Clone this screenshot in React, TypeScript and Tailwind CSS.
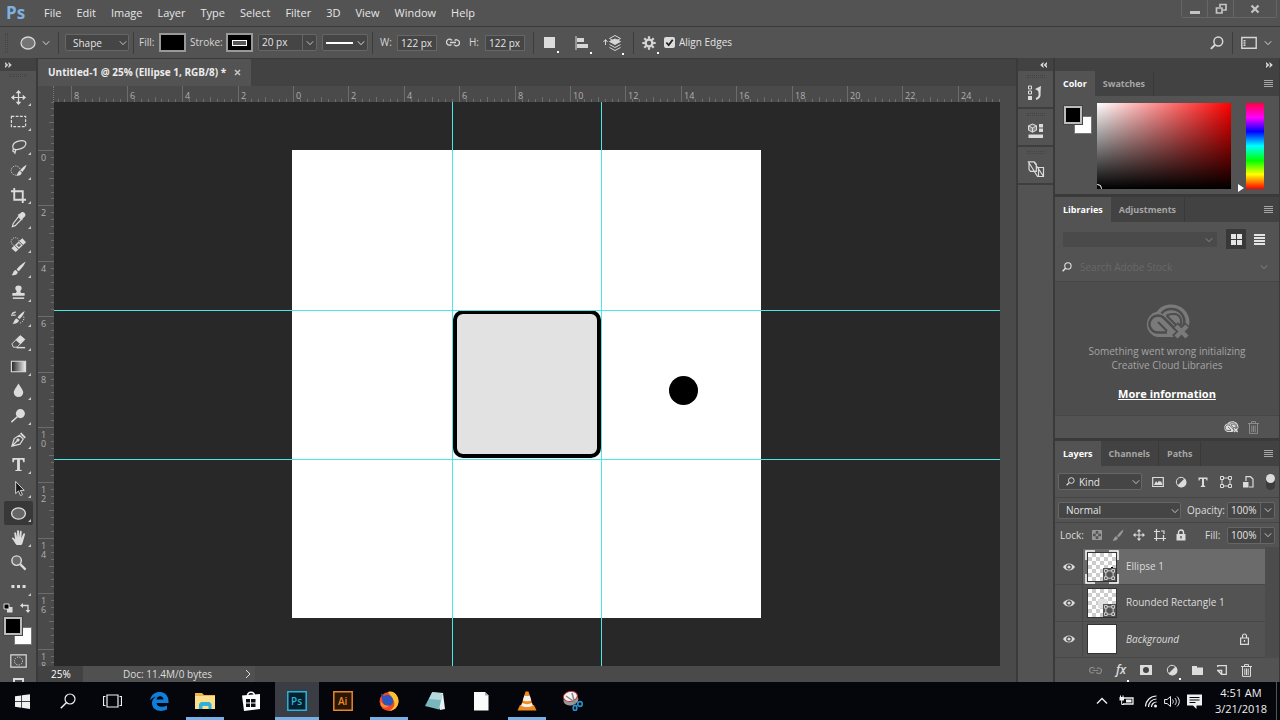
import { ReactNode } from 'react';

const menus = ['File', 'Edit', 'Image', 'Layer', 'Type', 'Select', 'Filter', '3D', 'View', 'Window', 'Help'];

const UNIT = 27.7;
const ORIGIN = -234;

type IconProps = { children: ReactNode; size?: string; box?: string; className?: string };

function Icon({ children, size = 'size-[18px]', box = '0 0 18 18', className = '' }: IconProps) {
  return (
    <svg viewBox={box} className={`${size} shrink-0 ${className}`} fill="none" stroke="currentColor" aria-hidden="true">
      {children}
    </svg>
  );
}

function Chevron({ className = '' }: { className?: string }) {
  return (
    <Icon size="size-2" box="0 0 8 8" className={className}>
      <path d="M.8 2.3 4 5.7l3.2-3.4" />
    </Icon>
  );
}

function Dot() {
  return <span className="absolute -right-[3px] -bottom-[4px] size-[2px] bg-white" />;
}

function Divider() {
  return <span className="h-[22px] w-px shrink-0 bg-[#3c3c3c]" />;
}

function Magnifier({ className = 'size-[14px]' }: { className?: string }) {
  return (
    <Icon size={className} box="0 0 14 14">
      <circle cx="8.3" cy="5.5" r="4.4" strokeWidth="1.5" />
      <path d="M5 8.8.9 12.9" strokeWidth="2" />
    </Icon>
  );
}

function Selector({ label, value, className, pad = 'pl-[7px]' }: { label: string; value: string; className: string; pad?: string }) {
  return (
    <span className={`relative block h-[17px] ${className}`}>
      <select
        aria-label={label}
        className={`block h-full w-full appearance-none rounded-[2px] border border-[#666] bg-[#454545] ${pad} pr-4 text-[10px] leading-[14px] text-[#e4e4e4]`}
      >
        <option>{value}</option>
      </select>
      <Chevron className="pointer-events-none absolute top-[5px] right-[2px] text-[#c0c0c0]" />
    </span>
  );
}

function Combo({ id, value, className }: { id: string; value: string; className: string }) {
  return (
    <span className={`flex h-[17px] rounded-[2px] border border-[#666] bg-[#454545] ${className}`}>
      <input id={id} aria-label={id} defaultValue={value} className="w-0 min-w-0 flex-1 bg-transparent pl-[3px] text-[10px] text-[#e4e4e4]" />
      <button aria-label={`${id} options`} className="grid w-[14px] place-items-center border-l border-[#666] text-[#c0c0c0]">
        <Chevron />
      </button>
    </span>
  );
}

function MenuBar() {
  return (
    <header className="flex h-[27px] shrink-0 items-center border-b border-[#3a3a3a] bg-[#535353]">
      <span className="w-9 pl-[6px] text-[17px] leading-6 font-bold text-[#7fb0e0]">Ps</span>
      <nav className="flex gap-[15px] pl-2 text-[11px] text-[#e6e6e6]">
        {menus.map((m) => (
          <button key={m}>{m}</button>
        ))}
      </nav>
      <div className="mr-[3px] ml-auto flex h-[18px] self-start rounded-b-[2px] border border-t-0 border-[#666] text-[#c4c4c4]">
        <button aria-label="Minimize" className="grid w-[26px] place-items-center border-r border-[#666]">
          <span className="mt-[7px] h-[3px] w-[10px] bg-current" />
        </button>
        <button aria-label="Restore" className="grid w-[26px] place-items-center border-r border-[#666]">
          <Icon size="size-3" box="0 0 12 12">
            <path d="M5 4V1.500h6V7H8M1.500 5h5.500v5H1.500z" strokeWidth="1.700" />
          </Icon>
        </button>
        <button aria-label="Close" className="grid w-[42px] place-items-center">
          <Icon size="size-[10px]" box="0 0 10 10">
            <path d="m1.500 1.500 7 7m0-7-7 7" strokeWidth="2.200" />
          </Icon>
        </button>
      </div>
    </header>
  );
}

function OptionsBar() {
  return (
    <div className="flex h-[31px] shrink-0 items-center bg-[#535353] text-[10px] text-[#d6d6d6]">
      <span className="ml-[5px] h-5 w-[3px] border-x border-dotted border-[#444]" />
      <button aria-label="Ellipse tool presets" className="ml-3 flex w-[38px] items-center justify-between pr-2">
        <Icon size="h-[14px] w-4" box="0 0 16 14">
          <ellipse cx="8" cy="7" rx="7" ry="6" fill="#757575" strokeWidth="1.300" />
        </Icon>
        <Chevron />
      </button>
      <Divider />
      <Selector label="Tool mode" value="Shape" className="ml-[6px] mr-1 w-16" />
      <Divider />
      <span className="ml-[5px] w-5">Fill:</span>
      <button aria-label="Fill" className="h-[19px] w-[27px] border-2 border-[#999] bg-black" />
      <span className="ml-1 w-9">Stroke:</span>
      <button aria-label="Stroke" className="grid h-[19px] w-[27px] place-items-center border-2 border-[#999] bg-black">
        <span className="h-[6px] w-[15px] border border-white bg-[#555]" />
      </button>
      <Combo id="stroke-width" value="20 px" className="ml-[5px] w-[59px]" />
      <button aria-label="Stroke type" className="ml-[5px] mr-1 flex h-[17px] w-[46px] items-center justify-between rounded-[2px] border border-[#666] bg-[#454545] pr-[2px] pl-[3px]">
        <span className="h-[2px] w-[27px] bg-white" />
        <Chevron />
      </button>
      <Divider />
      <label htmlFor="w" className="ml-[7px] w-[17px]">W:</label>
      <input id="w" defaultValue="122 px" className="h-4 w-10 border border-[#666] bg-[#454545] pl-[3px] text-[#e4e4e4]" />
      <Icon size="mx-[9px] h-[9px] w-[14px]" box="0 0 14 9">
        <path d="M5.500 6.500a3 3 0 1 1 .5-4M8.500 2.500a3 3 0 1 1-.5 4M4 4.500h6" strokeWidth="1.300" />
      </Icon>
      <label htmlFor="h" className="w-4">H:</label>
      <input id="h" defaultValue="122 px" className="mr-2 h-4 w-10 border border-[#666] bg-[#454545] pl-[3px] text-[#e4e4e4]" />
      <Divider />
      <button aria-label="Path operations" className="relative ml-[10px] size-[11px] bg-[#dcdcdc]">
        <span className="absolute -right-[4px] -bottom-[5px] size-[2px] bg-white" />
      </button>
      <button aria-label="Path alignment" className="relative ml-5">
        <Icon size="size-[14px]" box="0 0 14 14">
          <path d="M1 0v14" />
          <path d="M2 2h7v4H2zM2 8h11v4H2z" fill="currentColor" stroke="none" />
        </Icon>
        <Dot />
      </button>
      <button aria-label="Path arrangement" className="relative ml-[14px]">
        <Icon size="h-4 w-[18px]" box="0 0 18 16">
          <path d="M2.500 10V5M.5 7l2-2.500L4.500 7" />
          <path d="m6.500 3.500 5.500-3 5.500 3-5.500 3zM6.500 9.500l5.500 3 5.500-3M6.500 12.500l5.500 3 5.500-3" />
          <path d="m6.500 6.500 5.500-2.500 5.500 2.500-5.500 3z" fill="currentColor" />
        </Icon>
        <Dot />
      </button>
      <span className="w-3" />
      <Divider />
      <button aria-label="Geometry options" className="relative ml-2">
        <Icon size="size-[14px]" box="0 0 14 14">
          <circle cx="7" cy="7" r="3.400" strokeWidth="2.400" />
          <path d="M7 .3v2.500M7 11.200v2.500M.3 7h2.500M11.200 7h2.500M2.300 2.300 4 4M10 10l1.700 1.700M2.300 11.700 4 10M10 4l1.700-1.700" strokeWidth="2.200" />
        </Icon>
        <Dot />
      </button>
      <label className="ml-2 flex items-center gap-1 text-[#e4e4e4]">
        <span className="relative size-[11px]">
          <input type="checkbox" defaultChecked className="block size-full appearance-none rounded-[2px] bg-[#dcdcdc]" />
          <Icon size="size-[11px]" box="0 0 11 11" className="pointer-events-none absolute inset-0 text-[#222]">
            <path d="M2.300 5.500 4.700 8l4-5.300" strokeWidth="1.800" />
          </Icon>
        </span>
        Align Edges
      </label>
      <button aria-label="Search" className="mr-2 ml-auto">
        <Magnifier />
      </button>
      <Divider />
      <button aria-label="Workspace" className="mr-2 ml-2 flex items-center gap-[7px]">
        <Icon size="h-[13px] w-4" box="0 0 16 13">
          <path d="M.8 1.500h14.400v10.700H.8z" strokeWidth="1.400" />
          <path d="M3.500 4v6" strokeWidth="2" strokeDasharray="1.500 .7" />
        </Icon>
        <Chevron />
      </button>
    </div>
  );
}

const tools: { name: string; draw: ReactNode; plain?: boolean }[] = [
  { name: 'Move', draw: <><path d="M9 3v12M3 9h12" strokeWidth="1.300" /><path d="m9 1 3 3.500H6zM9 17l3-3.500H6zM1 9l3.500-3v6zM17 9l-3.500-3v6z" fill="currentColor" stroke="none" /></> },
  { name: 'Rectangular marquee', draw: <path d="M1.500 3.500h15v11h-15z" strokeWidth="1.300" strokeDasharray="3 1.500" /> },
  { name: 'Lasso', draw: <path d="M5 12.500C2 11 2.500 7 5 5s8-3 10.500-1.500 1 5.500-2 7-6 2-8.500 1.500-2.500 2.500-.7 2.800 2.200-2 .7-2.800M5 14c.5 1 .5 2 0 2.800" strokeWidth="1.300" /> },
  { name: 'Quick selection', draw: <><circle cx="6" cy="9" r="4.800" strokeDasharray="1.200 1.200" /><path d="M17.500 3c-2 1-5 3.500-6.500 5.500l2 2c2-2 4-5 4.500-7.500zM10.500 9.500l2 2c-.5 2.500-3 3.500-6 3 1.500-.8 1.500-4.500 4-5z" fill="currentColor" stroke="none" /></> },
  { name: 'Crop', draw: <path d="M4.500 1v12.500H17M1 4.500h12.500V17" strokeWidth="2" /> },
  { name: 'Eyedropper', draw: <><path d="m9 6 3 3-6.500 6.500-3 1 .8-3z" strokeWidth="1.200" /><path d="m8 4 1.500-.5L12 1.500c2-1.500 5.500 1.500 4 4L13.500 8l-.5 2z" fill="currentColor" stroke="none" /></> },
  { name: 'Healing brush', draw: <><circle cx="5.500" cy="6" r="4.200" strokeDasharray="1.200 1.200" /><path d="M1.500 13 13 2.500l4 4L6 17z" fill="currentColor" stroke="none" /><path d="m4.800 9.800 4.500 4.500M9.500 5.500l4.500 4.500" stroke="#535353" /><path d="M7.500 9.700h4M9.500 7.700v4" stroke="#535353" strokeWidth="1.200" /></> },
  { name: 'Brush', draw: <path d="M16.500 1.500C13 3.500 9 7 7 10l2 2c3-2.500 6.500-7 7.500-10.500zM6 10.500l2.300 2.300C8 15.500 5 16.800 1.500 16c2-1 1.700-5 4.500-5.500z" fill="currentColor" stroke="none" /> },
  { name: 'Clone stamp', draw: <><path d="M9 1.500c4 0 4 3.500 2.300 5.500-.7 1-.3 2.500.7 2.500h3.500v3h-13v-3H6c1 0 1.400-1.500.7-2.500C5 5 5 1.500 9 1.500z" fill="currentColor" stroke="none" /><path d="M3 15h12" strokeWidth="1.600" /></> },
  { name: 'History brush', draw: <><path d="M15.500 2C12 4 9.500 6.500 8 9l2 1.500c2.500-2 4.700-5 5.500-8.500zM7 10l2.500 2c-.5 3-3.500 4-7 3.500 2-1 2-5 4.500-5.500z" fill="currentColor" stroke="none" /><path d="M1 6.500h5M2 5l4-2" strokeWidth="1.500" /><path d="M14.500 8c1 3-1 6-4 7" strokeDasharray="1.300 1.300" /></> },
  { name: 'Eraser', draw: <><path d="M2 11.500 10.500 3l5 4-8 8H3.500z" /><path d="m6 7.500 5-5 5 4-5 5.500z" fill="currentColor" stroke="none" /><path d="M7 15.500h9" strokeWidth="1.500" /></> },
  { name: 'Gradient', draw: <><defs><linearGradient id="fade"><stop stopColor="#222" /><stop offset="1" stopColor="#eee" /></linearGradient></defs><path d="M1.500 3.500h15v11h-15z" fill="url(#fade)" strokeWidth="1.200" /></> },
  { name: 'Blur', draw: <path d="M9 1.500c2 4 5 6.500 5 9.500a5 5 0 0 1-10 0c0-3 3-5.500 5-9.500z" fill="currentColor" stroke="none" /> },
  { name: 'Dodge', draw: <><circle cx="11" cy="7" r="4.800" fill="currentColor" stroke="none" /><path d="m8 10-6.500 6" strokeWidth="1.600" /></> },
  { name: 'Pen', draw: <><path d="M2 16 4.500 8 10 4.500l4 4-3.500 5.500zM2 16l6-6" strokeWidth="1.300" /><circle cx="8.500" cy="9.500" r="1.200" fill="currentColor" /><path d="m10.500 3 5 5 1.300-1.500-4.800-5z" fill="currentColor" stroke="none" /></> },
  { name: 'Type', draw: <path d="M2.500 2h13v4.500H14l-.7-2.500H10.500v10.500l2 .5v1h-7v-1l2-.5V4H4.700L4 6.500H2.500z" fill="currentColor" stroke="none" /> },
  { name: 'Path selection', draw: <path d="M6 1.500v13l3-3 2.200 5 2-1-2.200-4.500h4z" fill="#1a1a1a" /> },
  { name: 'Ellipse', draw: <ellipse cx="9" cy="9" rx="7.300" ry="6" fill="#666" strokeWidth="1.400" /> },
  { name: 'Hand', draw: <path d="M6 17c-2-2-3-5-5-7 0-1.500 1.500-1.500 2.500 0l1 1-1-6.500c0-1.500 1.700-1.500 2 0l1 4.500V2.500c0-1.500 2-1.500 2 0V9l1-6.300c.3-1.400 2-1 1.900.4L11 9.700l2-4.500c.7-1.300 2.200-.5 1.800.8L13 12.500c-.4 2-1 3.500-2 4.500z" fill="currentColor" stroke="none" transform="translate(1 0)" /> },
  { name: 'Zoom', plain: true, draw: <><circle cx="7" cy="7" r="5" strokeWidth="1.500" fill="#6a6a6a" /><path d="m11 11 5.500 5.500" strokeWidth="2.400" /></> },
  { name: 'Edit toolbar', draw: <path d="M1.500 9h3.200M7.400 9h3.200M13.300 9h3.200" strokeWidth="3.200" /> },
];

function Toolbar() {
  return (
    <aside className="flex w-[38px] shrink-0 flex-col border-r-2 border-[#3a3a3a] bg-[#535353] text-[#dcdcdc]">
      <button className="h-[13px] bg-[#424242] pl-[5px] text-left text-[#d0d0d0]" aria-label="Expand tools">
        <DoubleArrow />
      </button>
      <span className="mx-auto mt-[3px] mb-2 h-[3px] w-[18px] border-y border-dotted border-[#444]" />
      <div className="flex min-h-0 flex-1 flex-col">
        {tools.map((t) => (
          <button
            key={t.name}
            aria-label={t.name}
            className={`relative mr-[3px] ml-1 flex min-h-0 flex-1 items-center justify-center rounded-[2px] ${t.name === 'Ellipse' ? 'bg-[#383838]' : ''}`}
          >
            <Icon size="size-[17px]">{t.draw}</Icon>
            {!t.plain && <span className="absolute right-[2px] bottom-[3px] border-b-[3px] border-l-[3px] border-b-[#c8c8c8] border-l-transparent" />}
          </button>
        ))}
      </div>
      <div className="flex h-[18px] shrink-0 items-center justify-between pr-[6px] pl-[3px]">
        <Icon size="size-[10px]" box="0 0 10 10">
          <path d="M4 4h5.500v5.500H4z" fill="#ddd" stroke="none" />
          <path d="M1 1h5v5H1z" fill="#000" />
        </Icon>
        <Icon size="size-[10px]" box="0 0 10 10">
          <path d="M3 0v5L0 2.500zM8 10l-2.500-3h5z" fill="currentColor" stroke="none" />
          <path d="M2 2.500h6V8" strokeWidth="1.300" />
        </Icon>
      </div>
      <Swatches />
      <button aria-label="Quick mask" className="mx-auto mt-[9px]">
        <Icon size="h-[14px] w-[17px]" box="0 0 17 14">
          <path d="M.8.8h15.400v12.400H.8z" strokeWidth="1.200" />
          <circle cx="8.500" cy="7" r="4" strokeDasharray="1.200 1.200" />
        </Icon>
      </button>
      <span className="mx-auto mt-[10px] h-[4px] w-[11px] shrink-0 border-2 border-b-0 border-[#ddd]" />
    </aside>
  );
}

function Swatches() {
  return (
    <div className="relative ml-1 h-[28px] w-7 shrink-0">
      <button aria-label="Background color" className="absolute right-0 bottom-0 size-[18px] border border-[#777] bg-white" />
      <button aria-label="Foreground color" className="absolute top-0 left-0 size-[18px] border-2 border-[#bbb] bg-black outline outline-[#444]" />
    </div>
  );
}

function DoubleArrow({ left = false }: { left?: boolean }) {
  return (
    <Icon size="h-[6px] w-[7px]" box="0 0 7 6" className={left ? 'rotate-180' : ''}>
      <path d="m0 0 3.300 3L0 6V4l.8-1L0 2zM3.500 0l3.300 3-3.300 3V4l.8-1-.8-1z" fill="currentColor" stroke="none" />
    </Icon>
  );
}

function Ruler({ vertical = false }: { vertical?: boolean }) {
  const first = vertical ? 0 : -8;
  const last = vertical ? 18 : 24;
  const ticks = Array.from({ length: (last - first + 4) * 4 }, (_, i) => first - 2 + i / 4);
  const labels = Array.from({ length: (last - first) / 2 + 1 }, (_, i) => first + i * 2);
  const at = (u: number) => Math.round(ORIGIN + u * UNIT);
  return (
    <svg className={vertical ? 'h-full w-4 shrink-0' : 'h-4 min-w-0 flex-1'} aria-hidden="true">
      <svg x={vertical ? 0 : '50%'} y={vertical ? '50%' : 0} overflow="visible">
        {ticks.map((u) => {
          const len = u % 2 === 0 ? 16 : u % 1 === 0 ? 5 : 3;
          return vertical ? (
            <rect key={u} x={16 - len} y={at(u)} width={len} height="1" fill="#6c6c6c" />
          ) : (
            <rect key={u} x={at(u)} y={16 - len} width="1" height={len} fill="#6c6c6c" />
          );
        })}
        {labels.map((u) => {
          const text = String(Math.abs(u));
          if (!vertical) {
            return <text key={u} x={at(u) + 3} y="13" fontSize="9" fill="#b0b0b0">{text}</text>;
          }
          return text.split('').map((d, i) => (
            <text key={`${u}-${i}`} x="3" y={at(u) + 11 + i * 9} fontSize="9" fill="#b0b0b0">{d}</text>
          ));
        })}
      </svg>
    </svg>
  );
}

function Artboard() {
  return (
    <div className="relative h-[468px] w-[469px] shrink-0 bg-white">
      <div className="absolute top-[160px] left-[161px] size-[148px] rounded-[10px] border-4 border-black bg-[#e2e2e2]" />
      <div className="absolute top-[226px] left-[377px] size-[29px] rounded-full bg-black" />
      <span className="absolute -inset-y-[100vh] left-[160px] w-px bg-[#4de6e6]" />
      <span className="absolute -inset-y-[100vh] left-[309px] w-px bg-[#4de6e6]" />
      <span className="absolute -inset-x-[100vw] top-[160px] h-px bg-[#4de6e6]" />
      <span className="absolute -inset-x-[100vw] top-[309px] h-px bg-[#4de6e6]" />
    </div>
  );
}

function DocumentArea() {
  return (
    <main className="flex min-w-0 flex-1 flex-col border-r-2 border-[#3a3a3a] bg-[#4a4a4a]">
      <div className="flex h-7 shrink-0 border-t border-[#3a3a3a] bg-[#424242]">
        <div className="flex items-center gap-[8px] bg-[#535353] px-[10px] text-[10px] font-bold text-[#ececec]">
          Untitled-1 @ 25% (Ellipse 1, RGB/8) *
          <button aria-label="Close document" className="text-[#c4c4c4]">
            <Icon size="size-[7px]" box="0 0 7 7">
              <path d="m1 1 5 5m0-5L1 6" strokeWidth="1.600" />
            </Icon>
          </button>
        </div>
      </div>
      <div className="flex h-4 shrink-0 pr-4">
        <span className="w-4 border-r border-dotted border-[#777]" />
        <Ruler />
      </div>
      <div className="flex min-h-0 flex-1 pr-4">
        <Ruler vertical />
        <div className="flex min-w-0 flex-1 items-center justify-center overflow-hidden bg-[#282828] pr-px">
          <Artboard />
        </div>
      </div>
      <footer className="flex h-4 shrink-0 items-center text-[10px] text-[#dcdcdc]">
        <span className="h-full w-[45px] bg-[#424242] pl-[13px] leading-4 text-white">25%</span>
        <span className="flex h-full w-[172px] items-center justify-between bg-[#505050] pr-[3px] pl-10">
          Doc: 11.4M/0 bytes
          <Icon size="size-2" box="0 0 8 8">
            <path d="m2 0 4 4-4 4" />
          </Icon>
        </span>
      </footer>
    </main>
  );
}

const dockIcons: { name: string; draw: ReactNode }[] = [
  { name: 'History', draw: <><path d="M1.500 2h3v3h-3zM1.500 7h3v3h-3z" /><path d="M1 12h4v4H1z" fill="currentColor" stroke="none" /><path d="M9 15c4-1 5-6 2-10" strokeWidth="2" /><path d="m8 5 6-3-.5 6z" fill="currentColor" stroke="none" /></> },
  { name: 'Properties', draw: <><path d="m5.500 2 4 1.800v4.400l-4 2-4-2V3.800zM1.500 3.800l4 2 4-2M5.500 5.800v4.400" fill="#8a8a8a" /><path d="M12 2h4v3.500h-4zM12 6.500h4V10h-4zM1.500 12.500h14.500V16H1.500z" fill="currentColor" stroke="none" /></> },
  { name: 'Shapes', draw: <path d="M.8 1.800h6.500l2 2.500v7H3.500l-1.500-2v-7.500M11.500 7.500h5v9h-5zM1.500 2l9 14.500h6M7 2l9.500 14.500" strokeWidth="1.200" /> },
];

function Dock() {
  return (
    <aside className="flex w-[37px] shrink-0 flex-col border-r-2 border-[#3a3a3a] bg-[#535353] text-[#dcdcdc]">
      <button aria-label="Expand dock" className="flex h-[13px] items-center justify-end bg-[#424242] pr-[6px]">
        <DoubleArrow left />
      </button>
      {dockIcons.map((d) => (
        <div key={d.name} className="flex h-[38px] flex-col items-center border-b-2 border-[#3e3e3e] pt-1">
          <span className="h-[3px] w-[18px] border-y border-dotted border-[#444]" />
          <button aria-label={d.name} className="mt-[6px]">
            <Icon>{d.draw}</Icon>
          </button>
        </div>
      ))}
    </aside>
  );
}

function Tabs({ names }: { names: string[] }) {
  return (
    <div className="flex h-[25px] shrink-0 bg-[#424242] text-[9px] font-bold text-[#a6a6a6]">
      {names.map((n, i) => (
        <button key={n} className={i === 0 ? 'bg-[#535353] px-2 text-white' : 'border-r border-[#393939] px-2'}>
          {n}
        </button>
      ))}
      <button aria-label="Panel menu" className="mr-[6px] ml-auto">
        <Icon size="h-[7px] w-[9px]" box="0 0 9 7">
          <path d="M0 .5h9M0 2.500h9M0 4.500h9M0 6.500h9" />
        </Icon>
      </button>
    </div>
  );
}

function ColorPanel() {
  return (
    <section className="border-b-[3px] border-[#3a3a3a]">
      <Tabs names={['Color', 'Swatches']} />
      <div className="flex h-[98px] pt-[7px] pl-[5px]">
        <div className="mt-[3px]">
          <Swatches />
        </div>
        <div className="relative ml-[5px] h-[86px] flex-1 overflow-hidden bg-[linear-gradient(to_top,#000,transparent),linear-gradient(to_right,#fff,#f00)]">
          <span className="absolute -bottom-1 -left-1 size-[9px] rounded-full border border-white" />
        </div>
        <span className="mt-[81px] mr-[2px] ml-[7px] h-0 border-y-[4px] border-l-[6px] border-y-transparent border-l-white" />
        <span className="mr-[15px] h-[86px] w-[18px] bg-[linear-gradient(to_bottom,#ff0040,#f0f_17%,#00f_33%,#0ff_50%,#0f0_67%,#ff0_83%,#f00)]" />
      </div>
    </section>
  );
}

function CloudLogo({ className, knock }: { className: string; knock: string }) {
  return (
    <Icon size={className} box="0 0 46 36">
      <path d="M13.500 33a13 13 0 0 1-.5-25.500C16 3 21 .5 27 .5c10 0 18 7 18.500 17C45.500 26 38 33 30 33z" fill="currentColor" stroke="none" />
      <path d="M23 28.500h-9a8.500 8.500 0 1 1 6-14.500l11 11" stroke={knock} strokeWidth="2.500" strokeLinejoin="round" />
      <path d="M17.500 9.500C22 3.500 32 3.500 37 9c4.500 5 4 11 1 15" stroke={knock} strokeWidth="2.500" />
      <path d="m14 18 9 9M22.500 11.500 34 23c5-2 4-12-3-13-4-.5-6 .5-8.500 1.500" stroke={knock} strokeWidth="2" />
      <path d="m31 21 13 13m0-13L31 34" stroke={knock} strokeWidth="8" />
      <path d="m32 22 11 11m0-11L32 33" strokeWidth="4.500" />
    </Icon>
  );
}

function Trash({ className = '' }: { className?: string }) {
  return (
    <Icon size="h-[13px] w-[11px]" box="0 0 11 13" className={className}>
      <path d="M0 2.500h11M3.500 2V.6h4V2M1.500 3v9.400h8V3M3.800 4.500v6.500M5.500 4.500v6.500M7.200 4.500v6.500" />
    </Icon>
  );
}

function LibrariesPanel() {
  return (
    <section className="border-b-[3px] border-[#3a3a3a]">
      <Tabs names={['Libraries', 'Adjustments']} />
      <div className="flex h-[34px] items-center pr-[14px] pl-2">
        <span className="relative block h-[15px] flex-1">
          <select aria-label="Library" disabled className="block h-full w-full appearance-none bg-[#4a4a4a]" />
          <Chevron className="absolute top-1 right-1 text-[#888]" />
        </span>
        <button aria-label="Grid view" className="ml-[9px] grid size-5 place-items-center bg-[#383838] text-[#e4e4e4]">
          <Icon size="size-[11px]" box="0 0 11 11">
            <path d="M0 0h5v5H0zM6 0h5v5H6zM0 6h5v5H0zM6 6h5v5H6z" fill="currentColor" stroke="none" />
          </Icon>
        </button>
        <button aria-label="List view" className="ml-2 text-[#e4e4e4]">
          <Icon size="size-[11px]" box="0 0 11 11">
            <path d="M0 1h11M0 4h11M0 7h11M0 10h11" strokeWidth="2" />
          </Icon>
        </button>
      </div>
      <div className="flex h-[26px] items-start gap-2 border-b border-[#464646] pt-1 pr-[11px] pl-[7px] text-[#e4e4e4]">
        <Magnifier className="mt-[2px] size-[10px]" />
        <input aria-label="Search Adobe Stock" placeholder="Search Adobe Stock" className="w-0 min-w-0 flex-1 bg-transparent text-[10px] leading-[14px] placeholder:text-[#686868]" />
        <Chevron className="mt-[3px] text-[#888]" />
      </div>
      <div className="flex h-[133px] flex-col items-center bg-[#4d4d4d] pt-[22px] text-[10px] text-[#a4a4a4]">
        <CloudLogo className="h-9 w-[46px] text-[#7a7a7a]" knock="#4d4d4d" />
        <p className="mt-1 text-center leading-[14px]">
          Something went wrong initializing
          <br />
          Creative Cloud Libraries
        </p>
        <a href="#more" className="mt-[14px] text-[11px] leading-4 font-bold text-white underline">
          More information
        </a>
      </div>
      <div className="flex h-[23px] items-center justify-end gap-[9px] border-t border-[#464646] pr-5">
        <CloudLogo className="h-3 w-4 text-[#dcdcdc]" knock="#535353" />
        <Trash className="text-[#8c8c8c]" />
      </div>
    </section>
  );
}

const filters: { name: string; draw: ReactNode }[] = [
  { name: 'Pixel layers', draw: <><path d="M.7 1.500h10.600v9H.7z" strokeWidth="1.200" /><path d="m2 9 2-4 1.500 2L7 4.500 8 6l1-1 1.500 4z" fill="currentColor" stroke="none" /></> },
  { name: 'Adjustment layers', draw: <><circle cx="6" cy="6" r="4.700" /><path d="M9.500 2.500a5 5 0 1 1-7 7z" fill="currentColor" stroke="none" /></> },
  { name: 'Type layers', draw: <path d="M1.500 1.500h9v3h-1L9 3H7v6.500l1.200.5v1H3.800v-1L5 9.500V3H3l-.5 1.500h-1z" fill="currentColor" stroke="none" /> },
  { name: 'Shape layers', draw: <><path d="M2 2h8v8H2z" /><path d="M.5.5h3v3h-3zM8.500.5h3v3h-3zM.5 8.500h3v3h-3zM8.500 8.500h3v3h-3z" fill="#535353" /></> },
  { name: 'Smart objects', draw: <><path d="M4 5V.7h4.500L11 3v8H7" strokeWidth="1.200" /><path d="M1 6h5.500v5.500H1z" fill="currentColor" stroke="none" /></> },
];

const locks: { name: string; dim?: boolean; draw: ReactNode }[] = [
  { name: 'Lock transparent pixels', dim: true, draw: <><path d="M1.500 1.500h9v9h-9z" /><path d="M2 2h2.700v2.700H2zM7.300 2H10v2.700H7.300zM4.700 4.700h2.600v2.600H4.700zM2 7.300h2.700V10H2zM7.300 7.300H10V10H7.300z" fill="currentColor" stroke="none" /></> },
  { name: 'Lock image pixels', dim: true, draw: <path d="M11.500.5C9 2 6.500 4.500 5 7l1.500 1.300C9 6.500 11 3.500 11.500.5zM4.300 7.300 6 9c-.5 2-2.500 3-5.500 2.500 1.500-.7 1.500-3.700 3.800-4.200z" fill="currentColor" stroke="none" /> },
  { name: 'Lock position', draw: <><path d="M6 1.500v9M1.500 6h9" /><path d="m6 0 2.200 2.500H3.800zM6 12l2.200-2.500H3.800zM0 6l2.500-2.200v4.400zM12 6 9.500 3.800v4.400z" fill="currentColor" stroke="none" /></> },
  { name: 'Lock nesting', draw: <path d="M2.500 0v12M0 2.500h6M9.500 6v6M0 9.500h12M7 2h3v3" strokeWidth="1.200" /> },
  { name: 'Lock all', draw: <><path d="M1.500 5h9v6.500h-9z" fill="currentColor" stroke="none" /><path d="M3.500 5V3.500a2.500 2.500 0 0 1 5 0V5" strokeWidth="1.400" /><path d="M6 7v2.500" stroke="#535353" strokeWidth="1.400" /></> },
];

const layers = [
  { name: 'Ellipse 1', kind: 'ellipse' },
  { name: 'Rounded Rectangle 1', kind: 'rect' },
  { name: 'Background', kind: 'background' },
];

function ShapeBadge() {
  return (
    <span className="absolute right-0 bottom-0 grid size-[13px] place-items-center bg-[#535353] text-[#dcdcdc]">
      <Icon size="size-[11px]" box="0 0 12 12">
        <path d="M2 2h8v8H2z" />
        <path d="M.5.5h3v3h-3zM8.500.5h3v3h-3zM.5 8.500h3v3h-3zM8.500 8.500h3v3h-3z" fill="#535353" />
      </Icon>
    </span>
  );
}

function LayerRow({ name, kind }: { name: string; kind: string }) {
  const selected = kind === 'ellipse';
  const solid = kind === 'background';
  return (
    <li className="flex min-h-0 flex-1 border-b border-[#484848]">
      <button aria-label={`Toggle ${name}`} className="grid w-7 place-items-center border-r border-[#484848]">
        <Icon size="h-2 w-3" box="0 0 12 8">
          <path d="M0 4c3-4.700 9-4.700 12 0-3 4.700-9 4.700-12 0z" fill="#dcdcdc" stroke="none" />
          <circle cx="6" cy="4" r="2.200" fill="#dcdcdc" stroke="#444" strokeWidth="1.200" />
        </Icon>
      </button>
      <button className={`flex flex-1 items-center pl-[2px] text-left ${selected ? 'bg-[#6b6b6b]' : ''}`}>
        <span className="relative grid size-[34px] place-items-center">
          {selected && (
            <Icon size="size-[34px]" box="0 0 34 34" className="absolute inset-0 text-white">
              <path d="M1 10V1h9M24 1h9v9M33 24v9h-9M10 33H1v-9" strokeWidth="1.500" />
            </Icon>
          )}
          <span
            className={
              solid
                ? 'relative size-[30px] border border-[#333] bg-white'
                : 'relative size-[30px] border border-[#333] bg-[conic-gradient(#ccc_25%,#fff_0_50%,#ccc_0_75%,#fff_0)] bg-[length:8px_8px]'
            }
          >
            {kind === 'rect' && <span className="absolute top-[10px] left-[10px] size-[9px] bg-[#e0e0e0]" />}
            {selected && <span className="absolute top-[14px] left-[23px] size-[2px] bg-black" />}
            {!solid && <ShapeBadge />}
          </span>
        </span>
        <span className={`ml-[7px] flex-1 ${solid ? 'italic' : ''}`}>{name}</span>
        {solid && (
          <Icon size="h-3 w-[9px]" box="0 0 9 12" className="mr-4">
            <path d="M.6 5h7.800v6.400H.6zM2.500 5V3a2 2 0 0 1 4 0v2M4.500 7v2" strokeWidth="1.200" />
          </Icon>
        )}
      </button>
    </li>
  );
}

function LayersPanel() {
  return (
    <section className="flex min-h-0 flex-1 flex-col text-[10px] text-[#dcdcdc]">
      <Tabs names={['Layers', 'Channels', 'Paths']} />
      <div className="flex h-8 shrink-0 items-center border-b border-[#464646] pr-1 pl-[3px]">
        <span className="relative mr-[10px]">
          <Selector label="Filter kind" value="Kind" className="w-[84px]" pad="pl-[20px]" />
          <span className="pointer-events-none absolute top-[4px] left-2">
            <Magnifier className="size-[9px]" />
          </span>
        </span>
        <span className="flex flex-1 justify-between">
          {filters.map((f) => (
            <button key={f.name} aria-label={f.name}>
              <Icon size="size-3" box="0 0 12 12">{f.draw}</Icon>
            </button>
          ))}
        </span>
        <button aria-label="Toggle filtering" className="ml-3 flex h-4 w-[9px] items-start rounded-full bg-[#3c3c3c]">
          <span className="size-[9px] rounded-full bg-[#dcdcdc]" />
        </button>
      </div>
      <div className="flex h-[25px] shrink-0 items-center border-b border-[#464646] pr-1 pl-[3px]">
        <Selector label="Blend mode" value="Normal" className="min-w-0 flex-1" />
        <label htmlFor="opacity" className="w-[46px] pl-[6px]">Opacity:</label>
        <Combo id="opacity" value="100%" className="w-12" />
      </div>
      <div className="flex h-6 shrink-0 items-center pr-1 pl-[5px]">
        <span className="w-[31px]">Lock:</span>
        <span className="flex gap-[9px]">
          {locks.map((l) => (
            <button key={l.name} aria-label={l.name} className={l.dim ? 'text-[#989898]' : ''}>
              <Icon size="size-3" box="0 0 12 12">{l.draw}</Icon>
            </button>
          ))}
        </span>
        <label htmlFor="fill" className="ml-auto w-[22px]">Fill:</label>
        <Combo id="fill" value="100%" className="w-12" />
      </div>
      <ul className="flex min-h-0 flex-1 flex-col border-r-[14px] border-[#4c4c4c] pt-[2px]">
        {layers.map((l) => (
          <LayerRow key={l.name} {...l} />
        ))}
      </ul>
      <div className="flex h-6 shrink-0 items-center justify-between pr-[27px] pl-[34px]">
        <button aria-label="Link layers" className="text-[#8c8c8c]">
          <Icon size="h-[9px] w-[13px]" box="0 0 14 9">
            <path d="M5.500 6.500a3 3 0 1 1 .5-4M8.500 2.500a3 3 0 1 1-.5 4M4 4.500h6" strokeWidth="1.300" />
          </Icon>
        </button>
        <button aria-label="Layer style" className="relative text-[12px] leading-4 font-semibold italic">
          fx
          <Dot />
        </button>
        <button aria-label="Add mask">
          <Icon size="h-[10px] w-3" box="0 0 12 10">
            <path d="M0 0h12v10H0z" fill="currentColor" stroke="none" />
            <circle cx="6" cy="5" r="3" fill="#444" stroke="none" />
          </Icon>
        </button>
        <button aria-label="New adjustment layer" className="relative">
          <Icon size="size-3" box="0 0 12 12">{filters[1].draw}</Icon>
          <Dot />
        </button>
        <button aria-label="New group">
          <Icon size="h-[10px] w-[11px]" box="0 0 11 10">
            <path d="M0 1h5v1.500h6V10H0z" fill="currentColor" stroke="none" />
          </Icon>
        </button>
        <button aria-label="New layer">
          <Icon size="size-[10px]" box="0 0 10 10">
            <path d="M.7 2V.7h8.600v8.600H4.500L.7 5.500h4v4" strokeWidth="1.300" />
          </Icon>
        </button>
        <button aria-label="Delete layer">
          <Trash />
        </button>
      </div>
    </section>
  );
}

const apps: { name: string; state?: string; draw: ReactNode }[] = [
  { name: 'Edge', draw: <path d="M1 9.500C2 3 7 .5 11.500 1 17 1.500 20 6 19.500 12H7.500c.5 4 6 5 10.500 2.500V18.500c-6 3-15 1.500-15-6.500 0-3 2-5.500 4.500-6.500C4.500 6 2.500 7.500 1 9.500zM7.500 8.500h7c0-4.500-6.500-4.500-7 0z" fill="#0f7fdc" stroke="none" /> },
  { name: 'File Explorer', state: 'open', draw: <><path d="M0 2h7l2 2h11v14H0z" fill="#eab54c" stroke="none" /><path d="M0 5h20v13H0z" fill="#fbdf8b" stroke="none" /><path d="M4 18v-5l2-2h8.500l2 2v5h-3v-3h-6v3z" fill="#2fb0dc" stroke="none" /></> },
  { name: 'Store', draw: <><path d="M6.500 5c0-5 7-5 7 0" stroke="#fff" strokeWidth="1.500" /><path d="M1 4.500 19 3v15L3 20z" fill="#fff" stroke="none" /><path d="M5 8h4v3.500H5zM10 8h4.500v3.500H10zM5 12.500h4V16H5zM10 12.500h4.500V16H10z" fill="#0a0c10" stroke="none" /></> },
  { name: 'Photoshop', state: 'active', draw: <><path d="M.8.8h18.400v18.400H.8z" fill="#06202c" stroke="#27b5e0" strokeWidth="1.500" /><text x="4" y="14" fontSize="10" fontWeight="600" fill="#27b5e0" stroke="none">Ps</text></> },
  { name: 'Illustrator', draw: <><path d="M.8.8h18.400v18.400H.8z" fill="#2b1604" stroke="#e8862a" strokeWidth="1.500" /><text x="5" y="14" fontSize="10" fontWeight="600" fill="#e8862a" stroke="none">Ai</text></> },
  { name: 'Firefox', state: 'open', draw: <><circle cx="10" cy="10.500" r="9.500" fill="#f2452c" stroke="none" /><path d="M9 1c6-2 11 4 10.500 10-.5 5-4.500 8.500-9 9 5-3 6-7 4-11z" fill="#ffc22e" stroke="none" /><path d="M2 2.500 5 5c3-2 7-1 8.500 2 2 4-.5 8-4 8S4 13 3.500 10z" fill="#2a56c0" stroke="none" /><path d="M1 5c0 7 4 10 9 9.500-2 3-6 2.500-8 0z" fill="#ff8a2a" stroke="none" /></> },
  { name: 'Notepad', draw: <><path d="m7 1 11 1 2 16-5 1z" fill="#e8f2f4" stroke="none" /><path d="M7 1.500 17.500 3 14 18.500 0 15z" fill="#78b8bd" stroke="none" /><path d="m7 1.500 10.500 1.500-1.500 6L4 8z" fill="#b4dade" stroke="none" /></> },
  { name: 'Document', draw: <><path d="M3 1h11l3.500 3.500V19.500H3z" fill="#fbfbfb" stroke="none" /><path d="M14 1v3.500h3.500z" fill="#aaa" stroke="none" /></> },
  { name: 'VLC', state: 'open', draw: <><path d="m3 14-2.500 5.500h19L17 14z" fill="#f08a1c" stroke="none" /><path d="M8.500.5h3l4.500 15c-3 2-9 2-12 0z" fill="#f58a1e" stroke="none" /><path d="m7.300 4.500-1.500 5c2 1 6.500 1 8.500 0l-1.500-5c-1.500.8-4 .8-5.500 0zM5 12l-.8 2.500c3 2 8.600 2 11.600 0L15 12c-3 1.500-7 1.500-10 0z" fill="#f2f2f2" stroke="none" /></> },
  { name: 'Snipping Tool', draw: <><ellipse cx="7.500" cy="7" rx="7.500" ry="5.500" fill="#999" stroke="none" transform="rotate(-12 7 7) translate(0 2)" /><ellipse cx="7.500" cy="5.500" rx="7" ry="5" fill="#f4f4f4" stroke="#c33" transform="rotate(-12 7 6)" /><path d="m3 5 10 7M9 2l3 11" stroke="#888" strokeWidth="1.500" /><circle cx="17" cy="13" r="2.300" stroke="#2d8fc9" strokeWidth="1.700" /><ellipse cx="12" cy="17" rx="1.800" ry="2.600" stroke="#2d8fc9" strokeWidth="1.700" /></> },
];

function Taskbar() {
  return (
    <footer className="flex h-[38px] shrink-0 items-stretch bg-[#04060b] text-[#f0f0f0]">
      <button aria-label="Start" className="grid w-[45px] place-items-center">
        <Icon size="size-[15px]" box="0 0 15 15">
          <path d="m0 2.300 6.300-.9v5.800H0zM7 1.300 15 .2v7H7zM0 7.900h6.300v5.800L0 12.800zM7 7.900h8v7l-8-1.100z" fill="currentColor" stroke="none" />
        </Icon>
      </button>
      <button aria-label="Search Windows" className="grid w-[45px] place-items-center">
        <Icon size="size-4" box="0 0 16 16">
          <circle cx="10" cy="6" r="5" strokeWidth="1.200" />
          <path d="M6.500 9.500.8 15.200" strokeWidth="1.500" />
        </Icon>
      </button>
      <button aria-label="Task View" className="mr-[2px] grid w-[45px] place-items-center">
        <Icon size="h-[14px] w-[19px]" box="0 0 19 14">
          <path d="M4 1h11v12H4zM2.500 2.500h-2v9h2M16.500 2.500h2v9h-2" strokeWidth="1.200" />
        </Icon>
      </button>
      <div className="flex gap-[2px]">
        {apps.map((a) => (
          <button
            key={a.name}
            aria-label={a.name}
            className={`relative grid w-11 place-items-center pb-px ${a.state === 'active' ? 'bg-[#3a3d44]' : ''}`}
          >
            <Icon size="size-5" box="0 0 20 20">{a.draw}</Icon>
            {a.state && <span className={`absolute bottom-0 h-[3px] bg-[#76b0e6] ${a.state === 'active' ? 'inset-x-0' : 'inset-x-[3px]'}`} />}
          </button>
        ))}
      </div>
      <div className="mr-[3px] ml-auto flex items-center gap-[7px] border-r border-[#555] pr-[9px]">
        <Icon size="size-3" box="0 0 12 12">
          <path d="m1 8.500 5-5 5 5" strokeWidth="1.400" />
        </Icon>
        <Icon size="h-3 w-[15px]" box="0 0 15 12" className="ml-1">
          <path d="M5 3h9v6H4" strokeWidth="1.300" />
          <path d="M7 4.500h5.500v3H7zM.5 2h4.500v3.500H.5z" fill="currentColor" stroke="none" />
          <path d="M1.500.5V2M4 .5V2M2.700 5v4.500H5" />
        </Icon>
        <Icon size="h-[13px] w-3" box="0 0 12 13" className="ml-1">
          <path d="M.5 11.500A11 11 0 0 1 11.500 1M3.500 12A8 8 0 0 1 11.500 4M6.500 12a5 5 0 0 1 5-5" strokeWidth="1.200" />
          <circle cx="10.500" cy="11" r="1.500" fill="currentColor" stroke="none" />
        </Icon>
        <Icon size="h-[13px] w-4" box="0 0 16 13">
          <path d="M.6 4.500h2.500L6.500 1.500v10l-3.400-3H.6zM8.500 4.500c1 1 1 3 0 4M10.800 3c2 2 2 5 0 7M13 1.500c3 3 3 7 0 10" />
        </Icon>
        <Icon size="h-[15px] w-[15px]" box="0 0 15 15">
          <path d="M0 .5h15v11H9.500V15L6 11.500H0z" fill="currentColor" stroke="none" />
          <path d="M2.500 3.500h10M2.500 6h10M2.500 8.500h6" stroke="#04060b" />
        </Icon>
        <div className="ml-[6px] text-center text-[11px] leading-4">
          <div>4:51 AM</div>
          <div>3/21/2018</div>
        </div>
      </div>
    </footer>
  );
}

export default function App() {
  return (
    <div className="flex h-screen flex-col overflow-hidden bg-[#3a3a3a] font-['Open_Sans','Noto_Sans',sans-serif]">
      <MenuBar />
      <OptionsBar />
      <div className="flex min-h-0 flex-1">
        <Toolbar />
        <DocumentArea />
        <Dock />
        <aside className="flex w-[225px] shrink-0 flex-col border-r border-[#3a3a3a] bg-[#535353] text-[#dcdcdc]">
          <button aria-label="Collapse panels" className="flex h-[13px] shrink-0 items-center justify-end bg-[#424242] pr-[6px]">
            <DoubleArrow />
          </button>
          <ColorPanel />
          <LibrariesPanel />
          <LayersPanel />
        </aside>
      </div>
      <Taskbar />
    </div>
  );
}
